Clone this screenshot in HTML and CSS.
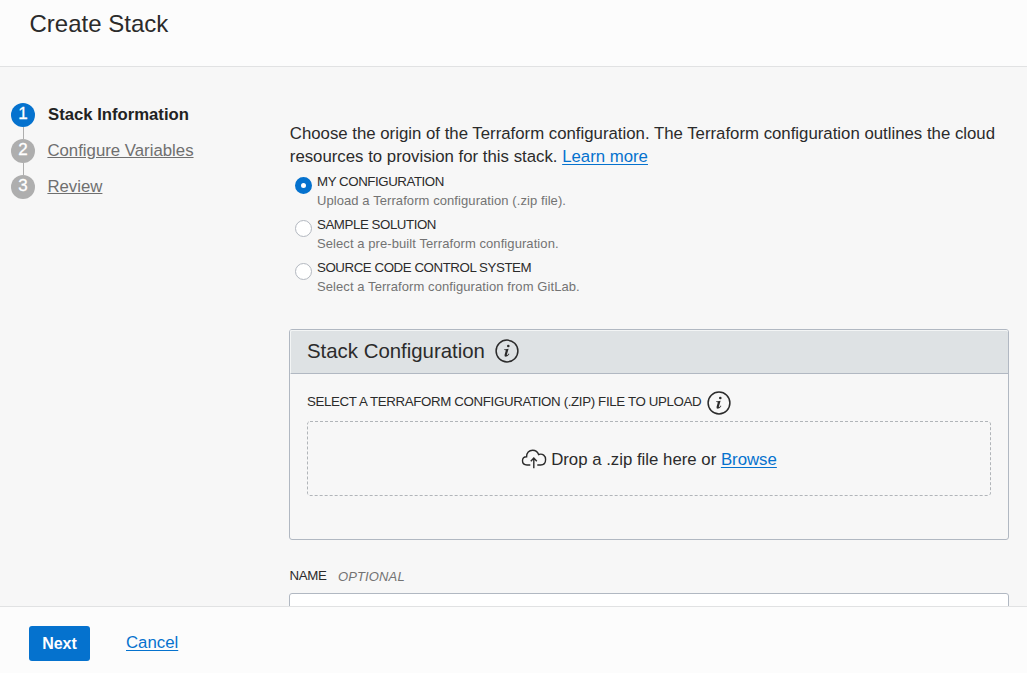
FILE: index.html
```html
<!DOCTYPE html>
<html lang="en">
<head>
<meta charset="utf-8">
<title>Create Stack</title>
<link rel="stylesheet" href="styles.css">
</head>
<body>
<div class="app">
  <header class="header"><h1 class="title">Create Stack</h1></header>
  <div class="body">
    <nav class="steps">
      <div class="step"><span class="num num-active">1</span><span class="step-current">Stack Information</span></div>
      <div class="line"></div>
      <div class="step"><span class="num">2</span><a class="step-link">Configure Variables</a></div>
      <div class="line"></div>
      <div class="step"><span class="num">3</span><a class="step-link">Review</a></div>
    </nav>
    <main class="main">
      <p class="intro">Choose the origin of the Terraform configuration. The Terraform configuration outlines the cloud<br>resources to provision for this stack. <a class="link">Learn more</a></p>
      <div class="options">
        <div class="option">
          <span class="radio radio-on"></span>
          <div><div class="opt-name">MY CONFIGURATION</div><div class="opt-desc">Upload a Terraform configuration (.zip file).</div></div>
        </div>
        <div class="option">
          <span class="radio"></span>
          <div><div class="opt-name">SAMPLE SOLUTION</div><div class="opt-desc">Select a pre-built Terraform configuration.</div></div>
        </div>
        <div class="option">
          <span class="radio"></span>
          <div><div class="opt-name">SOURCE CODE CONTROL SYSTEM</div><div class="opt-desc">Select a Terraform configuration from GitLab.</div></div>
        </div>
      </div>
      <section class="panel">
        <div class="panel-head">
          <h2 class="panel-title">Stack Configuration</h2>
          <svg class="info" viewBox="0 0 24 24"><circle cx="12" cy="12" r="10.9" fill="none" stroke="#2b2b2b" stroke-width="1.5"/><circle cx="13.3" cy="7" r="1.3" fill="#2b2b2b"/><path d="M9 10.4L13.6 9.7L11.9 15.5Q11.7 16.5 12.4 16.1Q13.2 15.5 13.8 14.6L14.4 15Q12.7 17.8 10.8 17.8Q9 17.7 9.6 15.7L10.8 11.6Q10.9 11 9 11.1Z" fill="#2b2b2b"/></svg>
        </div>
        <div class="panel-body">
          <div class="field-row">
            <span class="label upload-label">SELECT A TERRAFORM CONFIGURATION (.ZIP) FILE TO UPLOAD</span>
            <svg class="info info-field" viewBox="0 0 24 24"><circle cx="12" cy="12" r="10.9" fill="none" stroke="#2b2b2b" stroke-width="1.5"/><circle cx="13.3" cy="7" r="1.3" fill="#2b2b2b"/><path d="M9 10.4L13.6 9.7L11.9 15.5Q11.7 16.5 12.4 16.1Q13.2 15.5 13.8 14.6L14.4 15Q12.7 17.8 10.8 17.8Q9 17.7 9.6 15.7L10.8 11.6Q10.9 11 9 11.1Z" fill="#2b2b2b"/></svg>
          </div>
          <div class="drop">
            <svg class="dash" width="684" height="75" viewBox="0 0 684 75"><rect x=".5" y=".5" width="683" height="74" rx="2.5" fill="none" stroke="#b1b5b9" stroke-dasharray="3 2"/></svg>
            <svg class="cloud" viewBox="0 0 26 22" fill="none" stroke="#2b2b2b" stroke-width="1.4"><path d="M9.3 17H6C3.2 17 1.5 15.2 1.5 12.8C1.5 10.4 3.3 8.8 5.6 8.8C5.4 4.7 8.1 2.2 11.6 2.2C14.6 2.2 16.8 4 17.6 6.5C21.8 5.1 24.6 8 24.6 11.5C24.6 14.9 22.5 17 19.6 17H16.3M12.8 20.2V10M9.8 13.2L12.8 10.1L15.8 13.2"/></svg>
            <span class="drop-text">Drop a .zip file here or <a class="link">Browse</a></span>
          </div>
        </div>
      </section>
      <div class="name-row"><span class="label name-label">NAME</span><em class="optional">OPTIONAL</em></div>
      <div class="input"></div>
    </main>
  </div>
  <footer class="footer"><button class="next">Next</button><a class="link cancel">Cancel</a></footer>
</div>
</body>
</html>
```
FILE: styles.css
```css
* { box-sizing: border-box; }
body { margin: 0; font-family: "Liberation Sans", Arial, sans-serif; font-size: 16.8px; color: #2b2b2b; background: #f7f7f7; }
.app { height: 673px; display: flex; flex-direction: column; overflow: hidden; }
.header { height: 67px; flex: none; background: #fcfcfc; border-bottom: 1px solid #e1e2e3; padding: 10px 0 0 29.5px; }
.title { margin: 0; font-size: 24px; line-height: 28px; font-weight: 400; white-space: nowrap; }
.body { flex: 1; min-height: 0; display: flex; overflow: hidden; }
.steps { width: 289px; flex: none; padding: 36px 0 0 11px; }
.step { height: 24px; display: flex; align-items: center; white-space: nowrap; line-height: 20px; }
.num { width: 24px; height: 24px; border-radius: 50%; background: #aeaeae; color: #fff; text-align: center; line-height: 22px; font-size: 17px; margin-right: 12px; -webkit-text-stroke: .3px #fff; }
.num-active { background: #0572ce; }
.line { width: 1px; height: 12px; margin-left: 12px; background: #aeaeae; }
.step-current { font-size: 16.7px; font-weight: 700; margin-left: 1px; color: #222; }
.step-link { color: #6f6f6f; text-decoration: underline; text-underline-offset: 1px; margin-left: .4px; }
.main { width: 720px; flex: none; padding-top: 55px; }
.intro { margin: 0; padding-left: .8px; line-height: 23px; white-space: nowrap; }
.link { color: #0572ce; text-decoration: underline; text-decoration-thickness: 1px; text-underline-offset: 2px; }
.options { padding: 3px 0 0 6px; }
.option { display: flex; height: 43px; white-space: nowrap; }
.radio { width: 17px; height: 17px; border-radius: 50%; border: 1px solid #b3b8c0; background: #fff; margin: 6px 5px 0 0; flex: none; }
.radio-on { border: 6px solid #0572ce; }
.opt-name { font-size: 13.3px; line-height: 19px; padding-top: 1px; letter-spacing: -.44px; }
.opt-desc { font-size: 13px; line-height: 19px; color: #737373; letter-spacing: .08px; }
.panel { height: 211px; margin-top: 29px; border: 1px solid #b1b8c2; border-radius: 3px; }
.panel-head { height: 44px; background: #dee2e4; border: 1px solid #f3f5f5; border-right: 0; border-bottom: 1px solid #b1b8c2; border-radius: 2px 2px 0 0; padding: 0 0 2px 16px; display: flex; align-items: center; }
.panel-title { margin: 0; font-size: 20.4px; font-weight: 400; line-height: 24px; white-space: nowrap; }
.info { width: 24px; height: 24px; flex: none; margin-left: 10px; }
.panel-body { padding: 17px 17px 0; }
.field-row { height: 30px; display: flex; }
.label { font-size: 13.3px; line-height: 22px; white-space: nowrap; letter-spacing: -.35px; }
.info-field { margin-left: 6px; }
.drop { height: 75px; position: relative; display: flex; align-items: center; justify-content: center; white-space: nowrap; }
.dash { position: absolute; inset: 0; }
.cloud { width: 26px; height: 22px; margin-right: 4px; }
.drop-text { padding-top: 3px; }
.name-row { display: flex; height: 53px; padding-top: 25px; }
.name-label { padding-left: .5px; }
.optional { font-size: 13px; line-height: 24px; color: #737373; margin-left: 11.5px; letter-spacing: .12px; }
.input { height: 36px; background: #fff; border: 1px solid #b1b8c2; border-radius: 3px; }
.footer { height: 67px; flex: none; background: #fcfcfc; border-top: 1px solid #e1e2e3; display: flex; padding: 19px 0 0 29px; }
.next { width: 61px; height: 35px; border: 0; border-radius: 3px; padding: 0; background: #0572ce; color: #fff; font: 700 16px "Liberation Sans", Arial, sans-serif; }
.cancel { margin-left: 36px; line-height: 34px; }
```
